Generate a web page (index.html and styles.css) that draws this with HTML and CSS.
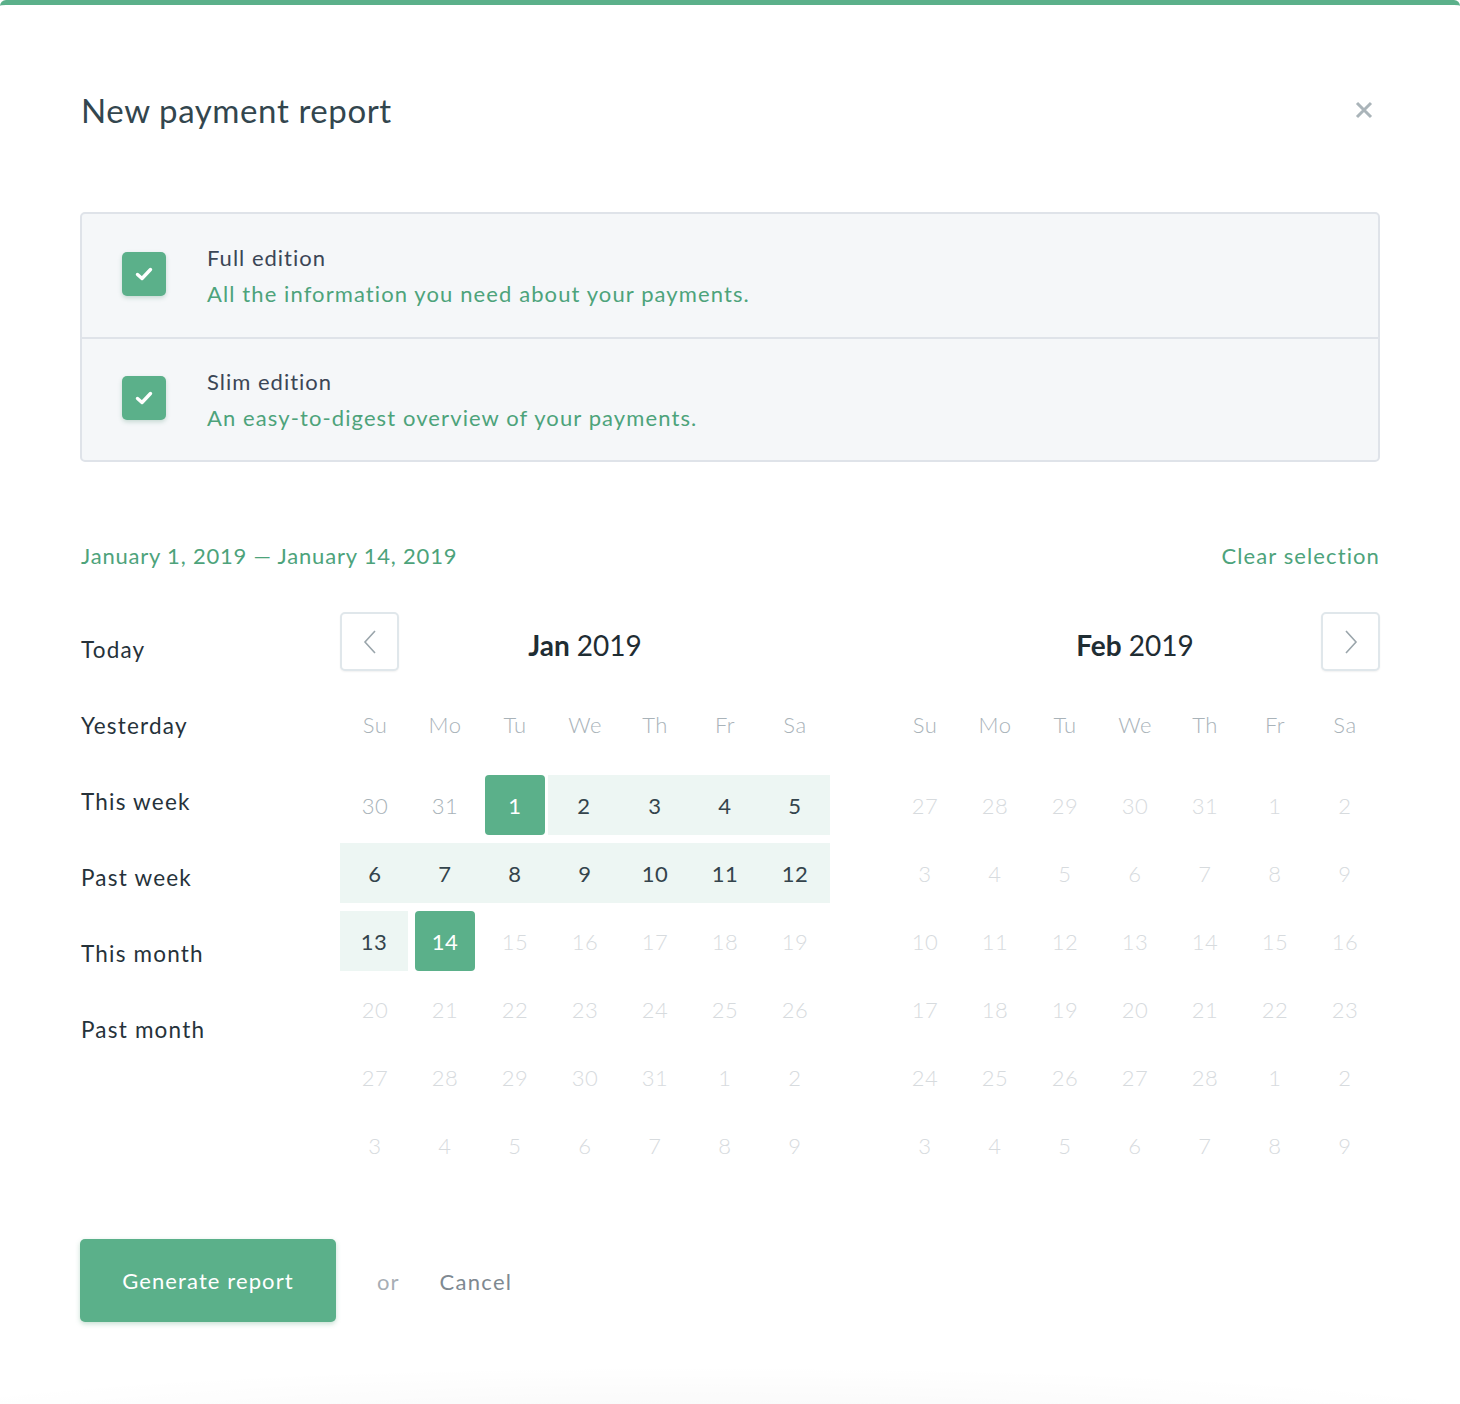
FILE: index.html
```html
<!DOCTYPE html>
<html>
<head>
<meta charset="utf-8">
<link rel="stylesheet" href="styles.css">
</head>
<body>
<div class="modal">
  <header class="head">
    <h1 class="title">New payment report</h1>
    <button class="close" aria-label="Close">
      <svg width="18" height="18" viewBox="0 0 18 18"><path d="M2 2 L16 16 M16 2 L2 16" stroke="#aab4b9" stroke-width="3" stroke-linecap="butt"/></svg>
    </button>
  </header>

  <div class="editions">
    <div class="edition">
      <span class="check"><svg width="20" height="16" viewBox="0 0 20 16"><path d="M3.5 8.5 L8 12.5 L16.5 3.5" fill="none" stroke="#fff" stroke-width="3.4" stroke-linecap="round" stroke-linejoin="round"/></svg></span>
      <div class="ed-text">
        <div class="ed-name">Full edition</div>
        <div class="ed-desc">All the information you need about your payments.</div>
      </div>
    </div>
    <div class="edition">
      <span class="check"><svg width="20" height="16" viewBox="0 0 20 16"><path d="M3.5 8.5 L8 12.5 L16.5 3.5" fill="none" stroke="#fff" stroke-width="3.4" stroke-linecap="round" stroke-linejoin="round"/></svg></span>
      <div class="ed-text">
        <div class="ed-name">Slim edition</div>
        <div class="ed-desc">An easy-to-digest overview of your payments.</div>
      </div>
    </div>
  </div>

  <div class="range-bar">
    <span class="range">January 1, 2019 — January 14, 2019</span>
    <a class="clear">Clear selection</a>
  </div>

  <div class="picker">
    <ul class="presets">
      <li>Today</li>
      <li>Yesterday</li>
      <li>This week</li>
      <li>Past week</li>
      <li>This month</li>
      <li>Past month</li>
    </ul>

    <div class="cal">
      <div class="cal-head">
        <button class="nav"><svg width="14" height="24" viewBox="0 0 14 24"><path d="M12 1 L2 12 L12 23" fill="none" stroke="#9aa5ab" stroke-width="1.6"/></svg></button>
        <div class="month"><b>Jan</b> 2019</div>
        <span class="nav-space"></span>
      </div>
      <div class="grid">
        <span class="dn">Su</span><span class="dn">Mo</span><span class="dn">Tu</span><span class="dn">We</span><span class="dn">Th</span><span class="dn">Fr</span><span class="dn">Sa</span>
        <span class="d out">30</span><span class="d out">31</span><span class="d sel">1</span><span class="d in">2</span><span class="d in">3</span><span class="d in">4</span><span class="d in">5</span>
        <span class="d in">6</span><span class="d in">7</span><span class="d in">8</span><span class="d in">9</span><span class="d in">10</span><span class="d in">11</span><span class="d in">12</span>
        <span class="d in last">13</span><span class="d sel">14</span><span class="d fut">15</span><span class="d fut">16</span><span class="d fut">17</span><span class="d fut">18</span><span class="d fut">19</span>
        <span class="d fut">20</span><span class="d fut">21</span><span class="d fut">22</span><span class="d fut">23</span><span class="d fut">24</span><span class="d fut">25</span><span class="d fut">26</span>
        <span class="d fut">27</span><span class="d fut">28</span><span class="d fut">29</span><span class="d fut">30</span><span class="d fut">31</span><span class="d fut">1</span><span class="d fut">2</span>
        <span class="d fut">3</span><span class="d fut">4</span><span class="d fut">5</span><span class="d fut">6</span><span class="d fut">7</span><span class="d fut">8</span><span class="d fut">9</span>
      </div>
    </div>

    <div class="cal">
      <div class="cal-head">
        <span class="nav-space"></span>
        <div class="month"><b>Feb</b> 2019</div>
        <button class="nav"><svg width="14" height="24" viewBox="0 0 14 24"><path d="M2 1 L12 12 L2 23" fill="none" stroke="#9aa5ab" stroke-width="1.6"/></svg></button>
      </div>
      <div class="grid">
        <span class="dn">Su</span><span class="dn">Mo</span><span class="dn">Tu</span><span class="dn">We</span><span class="dn">Th</span><span class="dn">Fr</span><span class="dn">Sa</span>
        <span class="d fut">27</span><span class="d fut">28</span><span class="d fut">29</span><span class="d fut">30</span><span class="d fut">31</span><span class="d fut">1</span><span class="d fut">2</span>
        <span class="d fut">3</span><span class="d fut">4</span><span class="d fut">5</span><span class="d fut">6</span><span class="d fut">7</span><span class="d fut">8</span><span class="d fut">9</span>
        <span class="d fut">10</span><span class="d fut">11</span><span class="d fut">12</span><span class="d fut">13</span><span class="d fut">14</span><span class="d fut">15</span><span class="d fut">16</span>
        <span class="d fut">17</span><span class="d fut">18</span><span class="d fut">19</span><span class="d fut">20</span><span class="d fut">21</span><span class="d fut">22</span><span class="d fut">23</span>
        <span class="d fut">24</span><span class="d fut">25</span><span class="d fut">26</span><span class="d fut">27</span><span class="d fut">28</span><span class="d fut">1</span><span class="d fut">2</span>
        <span class="d fut">3</span><span class="d fut">4</span><span class="d fut">5</span><span class="d fut">6</span><span class="d fut">7</span><span class="d fut">8</span><span class="d fut">9</span>
      </div>
    </div>
  </div>

  <div class="actions">
    <button class="generate">Generate report</button>
    <span class="or">or</span>
    <a class="cancel">Cancel</a>
  </div>
</div>
</body>
</html>
```

FILE: styles.css
```css
* { box-sizing: border-box; }
html, body { margin: 0; padding: 0; background: #ffffff; }
body {
  font-family: Lato, "Open Sans", sans-serif;
  color: #2c3a42;
  width: 1460px;
  height: 1404px;
  overflow: hidden;
}
.modal {
  position: relative;
  height: 1404px;
  border-top: 5px solid #5bb08a;
  border-radius: 6px 6px 0 0;
  padding: 0 80px;
  background:
    radial-gradient(ellipse 900px 70px at 700px 1430px, rgba(0,0,0,0.035), rgba(0,0,0,0) 100%),
    #fff;
}
.head {
  display: flex;
  align-items: center;
  justify-content: space-between;
  height: 207px;
  padding-top: 3px;
}
.title {
  margin: 0 0 0 1px;
  font-size: 33px;
  font-weight: 400;
  color: #33464e;
  letter-spacing: 0.6px;
}
.close {
  margin: 0 7px 0 0;
  padding: 0;
  border: 0;
  background: none;
  width: 18px;
  height: 18px;
  display: flex;
}
.editions {
  border: 2px solid #dfe3e9;
  border-radius: 5px;
  background: #f5f7f9;
}
.edition {
  display: flex;
  align-items: center;
  height: 123px;
  padding-left: 40px;
}
.edition + .edition { border-top: 2px solid #dfe3e9; }
.check {
  width: 44px;
  height: 44px;
  border-radius: 5px;
  background: #5bb08a;
  box-shadow: 0 2px 4px rgba(60,130,100,0.25);
  display: flex;
  align-items: center;
  justify-content: center;
  margin-right: 41px;
  margin-top: -4px;
}
.ed-name {
  font-size: 22px;
  color: #3b4656;
  line-height: 36px;
  letter-spacing: 1px;
}
.ed-desc {
  font-size: 22px;
  color: #4da37b;
  line-height: 36px;
  letter-spacing: 1.1px;
}
.range-bar {
  display: flex;
  justify-content: space-between;
  align-items: center;
  margin-top: 77px;
  height: 32px;
  font-size: 22px;
  color: #4da37b;
  padding-left: 1px;
  letter-spacing: 0.8px;
}
.clear { color: #4da37b; letter-spacing: 1.1px; }
.picker {
  display: flex;
  margin-top: 41px;
}
.presets {
  list-style: none;
  margin: 0;
  padding: 21px 0 0 1px;
  width: 260px;
  font-size: 22.5px;
  color: #26323a;
  letter-spacing: 1.2px;
}
.presets li {
  height: 76px;
  line-height: 34px;
}
.cal { width: 490px; }
.cal + .cal { margin-left: 60px; }
.cal-head {
  display: grid;
  grid-template-columns: 59px 1fr 59px;
  align-items: center;
  height: 59px;
}
.nav {
  width: 59px;
  height: 59px;
  padding: 0;
  border: 2px solid #e0e7eb;
  border-radius: 5px;
  background: #fff;
  box-shadow: 0 1px 2px rgba(0,0,0,0.06);
  display: flex;
  align-items: center;
  justify-content: center;
}
.month {
  text-align: center;
  font-size: 28px;
  color: #1f2d33;
  margin-top: 6px;
}
.month b { font-weight: 700; }
.grid {
  display: grid;
  grid-template-columns: repeat(7, 70px);
  grid-template-rows: 86px;
  grid-auto-rows: 60px;
  row-gap: 8px;
  margin-top: 10px;
}
.dn {
  display: flex;
  align-items: center;
  justify-content: center;
  font-size: 22px;
  color: #a9b3b9;
  font-weight: 300;
  letter-spacing: 0.5px;
}
.d {
  display: flex;
  align-items: center;
  justify-content: center;
  font-size: 22px;
  font-weight: 300;
  letter-spacing: 0.5px;
}
.d.out { color: #a7b2b8; }
.d.fut { color: #d7dbde; }
.d.in { background: #edf6f3; color: #34444c; font-weight: 400; }
.d.in.last { margin-right: 2px; }
.d.sel {
  background: #5bb08a;
  color: #fff;
  border-radius: 4px;
  margin: 0 5px;
  font-weight: 400;
}
.d.sel + .d.in { margin-left: -2px; }
.actions {
  display: flex;
  align-items: center;
  margin-top: 64px;
}
.generate {
  width: 256px;
  height: 83px;
  border: 0;
  border-radius: 5px;
  background: #5bb08a;
  color: #fff;
  font-family: Lato, sans-serif;
  font-size: 22px;
  letter-spacing: 1.1px;
  box-shadow: 0 2px 5px rgba(70,150,110,0.3);
  padding-bottom: 2px;
}
.or {
  margin-left: 41px;
  font-size: 22px;
  color: #a7aeb5;
  margin-top: 2px;
  letter-spacing: 1px;
}
.cancel {
  margin-left: 40px;
  font-size: 22px;
  color: #7e8991;
  margin-top: 2px;
  letter-spacing: 1.3px;
}
```
